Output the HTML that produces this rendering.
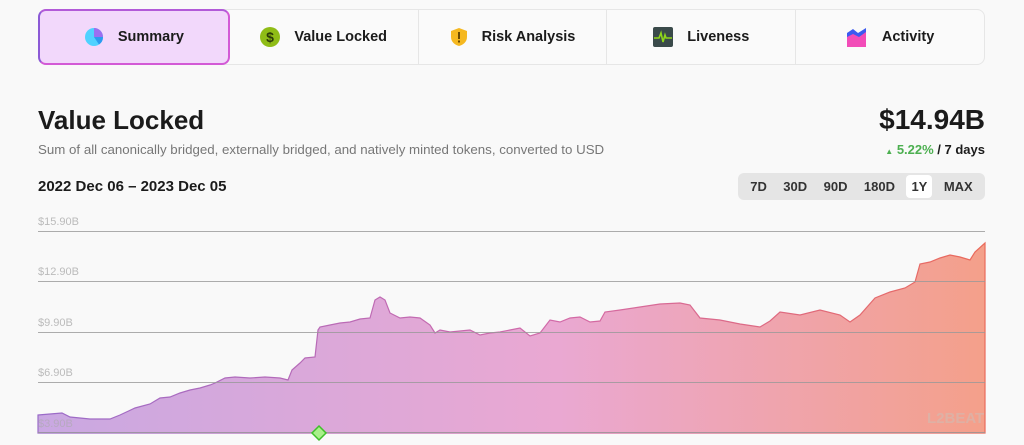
<!DOCTYPE html>
<html><head><meta charset="utf-8"><style>
*{box-sizing:border-box;margin:0;padding:0}
body{width:1024px;height:445px;overflow:hidden;background:#f9f9f9;font-family:"Liberation Sans",Arial,sans-serif;color:#1b1b1b;position:relative}
.tabs{position:absolute;left:38px;top:9px;width:947px;height:56px;border:1px solid #e6e6e6;border-radius:8px;background:#fafafa;display:flex}
.tab{flex:1;display:flex;align-items:center;justify-content:center;gap:14px;font-weight:bold;font-size:14.5px;border-left:1px solid #e6e6e6}
.tab:first-child{border:2px solid;border-color:#d35ad6;border-radius:8px;background:#f2d8fb;margin:-1px 0 -1px -1px;border-left-color:#8c5ad6;border-top-color:#b25ad8}
.tab:nth-child(2){border-left:none}
.ab{position:absolute}
.rng{position:absolute;left:738px;top:173px;width:247px;height:27px;background:#e5e5e5;border-radius:6px;display:flex;align-items:center;justify-content:space-around;padding:0 4px;font-size:13px;font-weight:bold;color:#333}
.rng span{padding:4px 5px;border-radius:4px}
.rng .on{background:#fff}
</style></head><body>
<div class="tabs">
<div class="tab"><svg width="20" height="20" viewBox="0 0 20 20"><circle cx="10" cy="10" r="9" fill="#4fd2ff"/><path d="M10 10L10 1A9 9 0 0 1 19 10Z" fill="#9b6ff0"/><path d="M10 10L19 10A9 9 0 0 1 15 17.5Z" fill="#2a9cf0"/></svg>Summary</div>
<div class="tab"><svg width="20" height="20" viewBox="0 0 20 20"><circle cx="10" cy="10" r="10" fill="#8fbc16"/><text x="10" y="15" font-size="14" font-weight="bold" text-anchor="middle" fill="#2c3a08" font-family="Liberation Sans">$</text></svg>Value Locked</div>
<div class="tab"><svg width="18" height="20" viewBox="0 0 18 20"><path d="M9 1L17 4V10C17 15 13 18 9 19C5 18 1 15 1 10V4Z" fill="#f5b820"/><rect x="8" y="5" width="2" height="7" fill="#6b4a00"/><rect x="8" y="13.5" width="2" height="2" fill="#6b4a00"/></svg>Risk Analysis</div>
<div class="tab"><svg width="20" height="20" viewBox="0 0 20 20"><rect width="20" height="20" rx="2" fill="#3a4a4a"/><path d="M1 11H6L8 6L10 15L12 8L13 11H19" stroke="#8fd61a" stroke-width="1.6" fill="none"/></svg>Liveness</div>
<div class="tab"><svg width="22" height="20" viewBox="0 0 22 20"><path d="M1 6L7 2L12 6L20 1V12H1Z" fill="#3b5af0"/><path d="M1 10L7 7L13 10L20 5V20H1Z" fill="#f24cb8"/></svg>Activity</div>
</div>
<div class="ab" style="left:38px;top:105px;font-size:26px;font-weight:bold">Value Locked</div>
<div class="ab" style="left:38px;top:142px;font-size:13.3px;color:#777">Sum of all canonically bridged, externally bridged, and natively minted tokens, converted to USD</div>
<div class="ab" style="right:39px;top:104px;font-size:28px;font-weight:bold">$14.94B</div>
<div class="ab" style="right:39px;top:142px;font-size:13px;font-weight:bold"><span style="color:#4caf50;font-size:8px">▲</span> <span style="color:#4caf50">5.22%</span> / 7 days</div>
<div class="ab" style="left:38px;top:178px;font-size:15px;font-weight:bold">2022 Dec 06 – 2023 Dec 05</div>
<div class="rng"><span>7D</span><span>30D</span><span>90D</span><span>180D</span><span class="on">1Y</span><span>MAX</span></div>
<svg class="ab" style="left:0;top:0" width="1024" height="445">
<defs><linearGradient id="g" x1="0" x2="1"><stop offset="0" stop-color="#c9a8e2"/><stop offset="0.55" stop-color="#eaa8d2"/><stop offset="1" stop-color="#f4a08a"/></linearGradient>
<linearGradient id="l" x1="0" x2="1"><stop offset="0" stop-color="#9a6bc8"/><stop offset="0.55" stop-color="#d26aa8"/><stop offset="1" stop-color="#ea6a5a"/></linearGradient></defs>
<g fill="#bbb" font-size="11" font-family="Liberation Sans"><text x="38" y="225">$15.90B</text><text x="38" y="275">$12.90B</text><text x="38" y="326">$9.90B</text><text x="38" y="376">$6.90B</text></g>
<path d="M38 415L50 414L62 413L70 417L90 419L110 419L120 415L135 408L150 404L160 398L170 397L180 393L190 390L200 388L210 385L215 383L225 378L235 377L250 378L265 377L280 378L288 380L292 370L300 363L305 358L315 357L318 330L320 327L330 325L340 323L350 322L360 319L370 318L375 300L380 297L385 300L390 313L400 318L410 317L420 318L430 325L435 333L440 330L450 332L460 331L470 330L480 335L490 333L500 332L510 330L520 328L530 336L540 333L550 320L560 322L570 318L580 317L590 322L600 321L605 312L620 310L640 307L660 304L680 303L690 305L700 318L720 320L740 324L760 327L770 321L780 312L800 315L820 310L840 315L850 322L860 315L875 298L890 292L905 288L915 282L920 264L930 262L940 258L950 255L960 257L970 260L975 252L985 243V433H38Z" fill="url(#g)" stroke="url(#l)" stroke-width="1.2"/>
<g stroke="#999" stroke-width="1" opacity="0.8"><line x1="38" y1="231.5" x2="985" y2="231.5"/><line x1="38" y1="281.5" x2="985" y2="281.5"/><line x1="38" y1="332.5" x2="985" y2="332.5"/><line x1="38" y1="382.5" x2="985" y2="382.5"/><line x1="38" y1="432.5" x2="985" y2="432.5"/></g>
<text x="38" y="427" fill="#aaa" opacity="0.6" font-size="11">$3.90B</text>
<text x="927" y="423" fill="#d9b5aa" opacity="0.8" font-size="15" font-weight="bold">L2BEAT</text>
<path d="M319 426L326 433L319 440L312 433Z" fill="#a8f08a" stroke="#3fc02a" stroke-width="1.5"/>
</svg>
</body></html>
